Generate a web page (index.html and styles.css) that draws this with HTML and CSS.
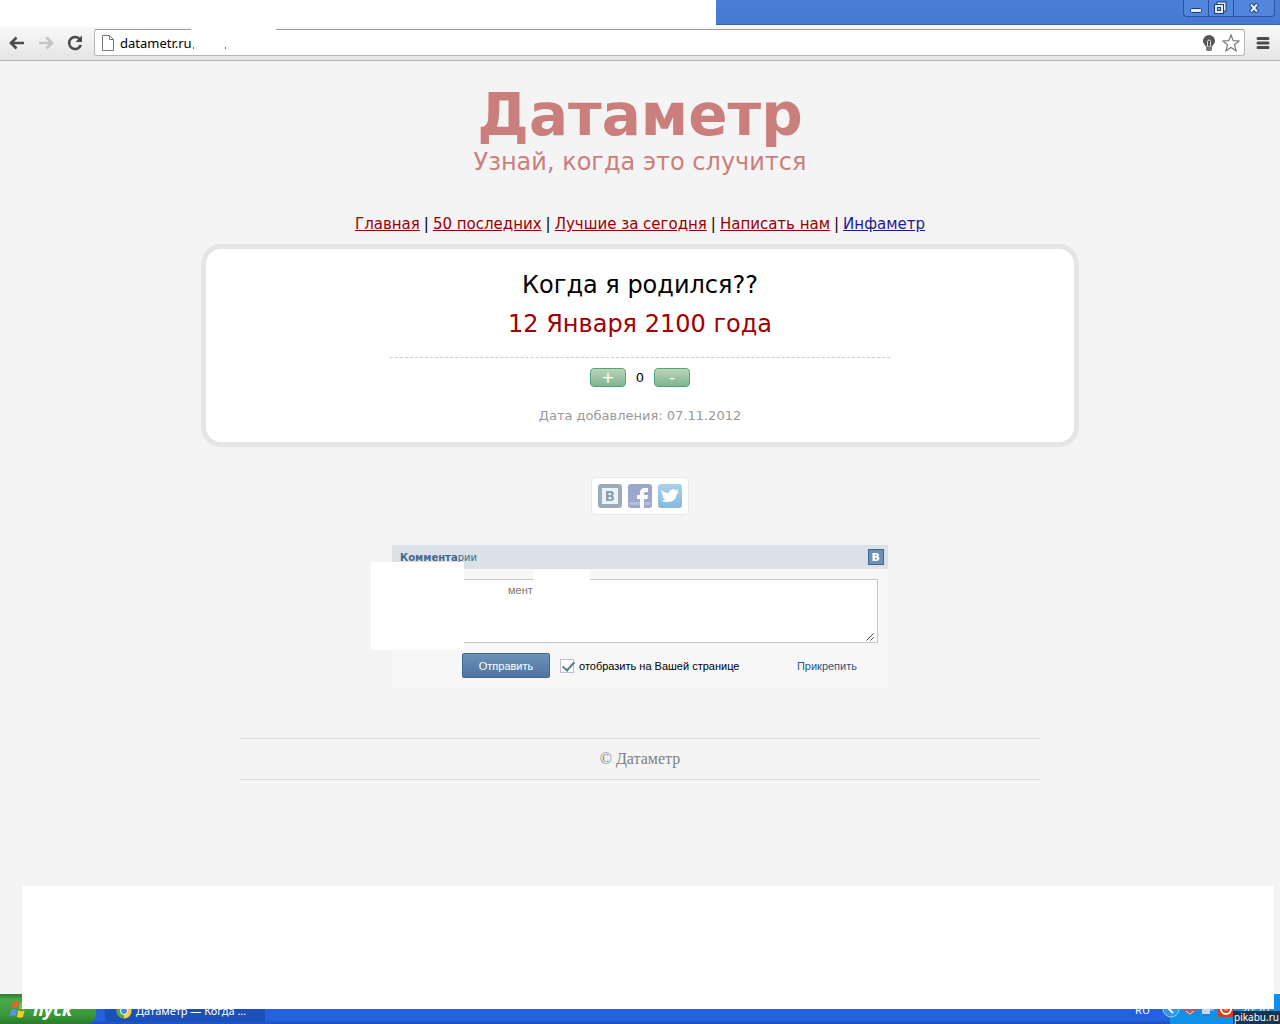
FILE: index.html
```html
<!DOCTYPE html>
<html lang="ru">
<head>
<meta charset="utf-8">
<title>Датаметр — Когда я родился??</title>
<link rel="stylesheet" href="styles.css">
</head>
<body>
<div class="titlebar">
  <div class="window-buttons">
    <button class="win-btn" aria-label="Свернуть"><svg width="24" height="16" viewBox="0 0 24 16"><rect x="6.500" y="8.500" width="11" height="4" rx="1" fill="#e4eefc" stroke="#1d3d78"/></svg></button>
    <button class="win-btn" aria-label="Развернуть"><svg width="24" height="16" viewBox="0 0 24 16"><g fill="none"><path d="M9.500 3.500h6v6h-6z" stroke="#1d3d78" stroke-width="4"/><path d="M9.500 3.500h6v6h-6z" stroke="#e4eefc" stroke-width="2"/><path d="M7 6h6v6H7z" stroke="#1d3d78" stroke-width="4" fill="#1d3d78"/><path d="M7 6h6v6H7z" stroke="#e4eefc" stroke-width="2"/><path d="M9 8h2v2H9z" fill="#9cbcf0"/></g></svg></button>
    <button class="win-btn win-close" aria-label="Закрыть"><svg width="40" height="16" viewBox="0 0 40 16"><path d="M16.500 4l7 8M23.500 4l-7 8" stroke="#1d3d78" stroke-width="4"/><path d="M17 4.500l6 7M23 4.500l-6 7" stroke="#e4eefc" stroke-width="2"/></svg></button>
  </div>
  <div class="patch patch-tabs"></div>
</div>
<div class="toolbar">
  <button class="tool" aria-label="Назад"><svg width="18" height="18" viewBox="0 0 18 18"><path d="M16 9H3M8.500 3.500L3 9l5.500 5.500" fill="none" stroke="#4b4b4b" stroke-width="2.700"/></svg></button>
  <button class="tool" aria-label="Вперёд"><svg width="18" height="18" viewBox="0 0 18 18"><path d="M2 9h13M9.500 3.500L15 9l-5.500 5.500" fill="none" stroke="#c4c4c4" stroke-width="2.700"/></svg></button>
  <button class="tool" aria-label="Обновить"><svg width="18" height="18" viewBox="0 0 18 18"><path d="M14 5.500A6 6 0 1 0 14.800 11" fill="none" stroke="#4b4b4b" stroke-width="2.600"/><path d="M16 1.500V8H9.500z" fill="#4b4b4b"/></svg></button>
  <div class="omnibox">
    <svg width="12" height="16" viewBox="0 0 12 16"><path d="M.5.5h7l4 4v11H.5zM7.500.5v4h4" fill="#fff" stroke="#777"/></svg>
    <input class="address" type="text" value="datametr.ru" aria-label="Адрес">
    <svg width="14" height="18" viewBox="0 0 14 18"><path d="M7 1a6 6 0 0 1 6 6c0 3-2.500 3.500-2.500 5.500h-7C3.500 10.500 1 10 1 7a6 6 0 0 1 6-6z" fill="#555"/><path d="M5.500 12V7.500a1.500 1.500 0 0 1 3 0V12" fill="none" stroke="#ddd"/><path d="M4 13h6v2.500L9 17H5l-1-1.500z" fill="#777"/></svg>
    <svg width="18" height="18" viewBox="0 0 18 18"><path d="M9 1l2.200 5.700 6 .3-4.700 3.800 1.600 6L9 13.500l-5.100 3.300 1.600-6L.8 7l6-.3z" fill="#fff" stroke="#777" stroke-width="1.200"/></svg>
    <div class="patch patch-address"></div>
  </div>
  <button class="tool" aria-label="Меню"><svg width="14" height="14" viewBox="0 0 14 14"><path d="M2 2.500h10M2 7h10M2 11.500h10" stroke="#4b4b4b" stroke-width="3" stroke-linecap="round"/></svg></button>
</div>

<main class="page">
  <header class="logo">
    <h1>Датаметр</h1>
    <p>Узнай, когда это случится</p>
  </header>
  <nav class="nav">
    <a href="#">Главная</a><span>|</span><a href="#">50 последних</a><span>|</span><a href="#">Лучшие за сегодня</a><span>|</span><a href="#">Написать нам</a><span>|</span><a class="blue" href="#">Инфаметр</a>
  </nav>
  <section class="card">
    <h2 class="question">Когда я родился??</h2>
    <p class="answer">12 Января 2100 года</p>
    <div class="vote"><button>+</button><span>0</span><button>-</button></div>
    <p class="added">Дата добавления: 07.11.2012</p>
  </section>
  <div class="share">
    <a href="#" aria-label="ВКонтакте"><svg width="24" height="24" viewBox="0 0 24 24"><rect width="24" height="24" rx="3" fill="#9cabb9"/><rect x="4" y="4" width="16" height="16" fill="#e9f3f8"/><path fill-rule="evenodd" d="M8 7h5c3.500 0 3.500 4 1.500 4.700C17 12.500 16.500 17 13 17H8zM10.500 9v2h1.800c1.200 0 1.200-2 0-2zM10.500 13v2.200h2c1.500 0 1.500-2.200 0-2.200z" fill="#8c9fae"/></svg></a>
    <a href="#" aria-label="Facebook"><svg width="24" height="24" viewBox="0 0 24 24"><rect width="24" height="24" rx="3" fill="#9ba7cc"/><path d="M1 18h22v3H1z" fill="#b4bddb"/><path d="M12 24v-9H9v-4h3V9c0-3.500 2-5 4.500-5H20v4h-2c-1.500 0-2 .5-2 1.500V11h4l-.5 4H16v9z" fill="#fff"/></svg></a>
    <a href="#" aria-label="Twitter"><svg width="24" height="24" viewBox="0 0 24 24"><defs><linearGradient id="tw" x2="0" y2="1"><stop stop-color="#acd1e8"/><stop offset="1" stop-color="#83bade"/></linearGradient></defs><rect width="24" height="24" rx="3" fill="url(#tw)"/><path d="M3 6c2.500 2 5 3 8 3C11 5 16 4 17.500 6.500l3-1-1.500 2.500 2 .3-2.500 2c0 5.200-4 7.700-8.500 7.700-2.500 0-5-.5-6.500-1.600 2 0 3-.4 4-1.300-2-.5-2.500-1.300-3-2.600h1.500C4.500 11.500 3.500 10.300 3.700 9L5 9.400C3.700 8.500 2.700 7.300 3 6z" fill="#fff"/></svg></a>
  </div>

  <form class="comments">
    <div class="comments-head"><h3><b>Коммента</b>рии</h3><svg width="16" height="16" viewBox="0 0 16 16"><rect x=".5" y=".5" width="15" height="15" fill="#6d90b6" stroke="#41658f"/><path fill-rule="evenodd" d="M4.500 4h4c3 0 3 3 1.500 3.600 2.200.6 2 4.400-1.500 4.400h-4zM7 5.500V7h1c1 0 1-1.500 0-1.500zM7 8.700v1.700h1.200c1 0 1-1.700 0-1.700z" fill="#fff"/></svg></div>
    <div class="comment-box">
      <textarea aria-label="Комментарий">мент</textarea>
      <svg class="grip" width="8" height="8" viewBox="0 0 8 8"><path d="M.5 7.500l7-7M4.500 7.500l3-3" stroke="#444"/></svg>
    </div>
    <div class="comment-actions">
      <button type="button">Отправить</button>
      <label><input type="checkbox" checked>отобразить на Вашей странице</label>
      <a href="#">Прикрепить</a>
    </div>
    <div class="patch patch-avatar"></div>
    <div class="patch patch-hint"></div>
  </form>

  <footer class="footer">© Датаметр</footer>
</main>

<div class="taskbar">
  <button class="start"><svg width="20" height="20" viewBox="0 0 20 20"><path d="M4 3c2-1.500 4-1.300 6 0L8.500 9.500c-2-1.200-4-1.200-6 0z" fill="#e8602c"/><path d="M11 3.500c2 1 4 1.200 6.500.2L16 10c-2.200 1-4.200.8-6.200-.2z" fill="#7cc142"/><path d="M2 11c2-1.300 4-1.200 6 0l-1.500 6.500c-2-1.200-4-1.200-6 0z" fill="#5b93ea"/><path d="M9.300 11.300c2 1 4 1.200 6.300.2L14 18c-2 1-4 .8-6.200-.3z" fill="#f8ca2f"/></svg>пуск</button>
  <button class="task"><svg width="16" height="16" viewBox="0 0 16 16"><circle cx="8" cy="8" r="7.500" fill="#e5493a"/><path d="M8 8L1.500 4.300A7.500 7.500 0 0 0 8 15.500z" fill="#4aae4e"/><path d="M8 15.500A7.500 7.500 0 0 0 14.500 4.300H8z" fill="#f7cf3c"/><circle cx="8" cy="8" r="3.500" fill="#4a86e0" stroke="#fff"/></svg>Датаметр — Когда ...</button>
  <span class="lang">RU</span>
  <div class="tray">
    <svg width="18" height="18" viewBox="0 0 18 18"><circle cx="9" cy="9" r="8" fill="#2a9af0" stroke="#8cd0fb"/><path d="M11 5L7 9l4 4" fill="none" stroke="#fff" stroke-width="2"/></svg>
    <svg width="16" height="16" viewBox="0 0 16 16"><path d="M1 5l7-3 7 3v5l-7 4-7-4z" fill="#9c6270"/><path d="M4 10l4 3 4-3" stroke="#ddd" fill="none"/></svg>
    <svg width="16" height="16" viewBox="0 0 16 16"><path d="M6 2h8v8H6z" fill="#8ba6d8"/><path d="M2 7h8v6H2z" fill="#c8d5ee"/><path d="M3 14h6" stroke="#4463a6"/></svg>
    <svg width="16" height="16" viewBox="0 0 16 16"><rect width="16" height="16" rx="2" fill="#d83a24"/><circle cx="8" cy="8" r="5" fill="none" stroke="#fff" stroke-width="2"/><circle cx="8" cy="8" r="2" fill="#f5a42a"/></svg>
    <span class="clock">20:20</span>
  </div>
  <div class="patch patch-bottom"></div>
  <span class="watermark">pikabu.ru</span>
</div>
</body>
</html>
```
FILE: styles.css
```css
* { box-sizing: border-box; }
body {
  margin: 0;
  min-height: 100vh;
  display: flex;
  flex-direction: column;
  background: #f4f4f4;
  font-family: "DejaVu Sans", Verdana, sans-serif;
  font-size: 13px;
  color: #000;
}
h1, h2, h3, p { margin: 0; font-weight: normal; }
button, input, textarea { font-family: inherit; margin: 0; }
button { padding: 0; border: 0; background: none; }
svg { display: block; flex: none; }
.patch { position: absolute; background: #fff; }

.titlebar {
  position: relative;
  height: 25px;
  display: flex;
  justify-content: flex-end;
  background: linear-gradient(#4a7fd8, #4679d2);
  border-bottom: 1px solid #3a63b0;
}
.window-buttons {
  display: flex;
  height: 17px;
  margin-right: 5px;
  border: 1px solid #2c539c;
  border-top: 0;
  border-radius: 0 0 4px 4px;
  background: #5286dc;
}
.win-btn + .win-btn { border-left: 1px solid #2c539c; }
.patch-tabs { left: 0; right: 564px; top: 0; height: 27px; }

.toolbar {
  height: 36px;
  display: flex;
  align-items: center;
  gap: 11px;
  padding: 0 10px 0 8px;
  background: linear-gradient(#fafafa, #e4e4e4);
  border-bottom: 1px solid #b4b4b4;
}
.omnibox {
  position: relative;
  flex: 1;
  height: 27px;
  display: flex;
  align-items: center;
  gap: 6px;
  margin-left: -1px;
  padding: 0 4px 0 7px;
  background: #fff;
  border: 1px solid #b5b5b5;
  border-top-color: #999;
  border-radius: 3px;
}
.address {
  flex: 1;
  min-width: 0;
  padding: 0;
  border: 0;
  background: none;
  font-family: "Noto Sans", Tahoma, sans-serif;
  font-size: 13px;
}
.patch-address { left: 96px; top: -4px; width: 85px; height: 25px; }
.patch-address::before,
.patch-address::after {
  content: "";
  position: absolute;
  left: 2px;
  bottom: 2px;
  width: 1px;
  height: 2px;
  background: #777;
}
.patch-address::after { left: 34px; }

.page {
  flex: 1;
  display: flex;
  flex-direction: column;
  align-items: center;
  padding: 22px 16px 0;
}
.logo { color: #cb7f7d; text-align: center; }
.logo h1 { font-size: 58px; line-height: 64px; font-weight: bold; }
.logo p { margin-top: 1px; font-size: 24px; line-height: 28px; }
.nav {
  display: flex;
  gap: 4px;
  margin-top: 38px;
  font-size: 15px;
  line-height: 20px;
}
.nav a { color: #990000; }
.nav .blue { color: #1a1a99; }
.card {
  width: 100%;
  max-width: 878px;
  margin-top: 10px;
  padding: 20px 16px 17px;
  display: flex;
  flex-direction: column;
  align-items: center;
  background: #fff;
  border: 5px solid #e5e5e5;
  border-radius: 20px;
}
.question, .answer { font-size: 24px; line-height: 32px; }
.answer {
  width: 500px;
  max-width: 100%;
  margin-top: 7px;
  padding-bottom: 17px;
  text-align: center;
  color: #a00000;
  border-bottom: 1px dashed #ccc;
}
.vote { display: flex; gap: 10px; margin-top: 10px; line-height: 19px; }
.vote button {
  width: 36px;
  height: 19px;
  border: 1px solid #4fa57c;
  border-radius: 4px;
  background: linear-gradient(#bcd4b8, #7db592);
  color: #fff;
  font-size: 16px;
  line-height: 16px;
}
.added { margin-top: 20px; color: #999; line-height: 18px; }

.share {
  display: flex;
  gap: 6px;
  margin-top: 30px;
  padding: 6px;
  background: #fff;
  border: 1px solid #e9e9e9;
  border-radius: 4px;
}

.comments {
  position: relative;
  width: 100%;
  max-width: 496px;
  margin-top: 30px;
  background: #f7f7f7;
  font-family: "Liberation Sans", Tahoma, sans-serif;
  font-size: 11px;
}
.comments-head {
  height: 24px;
  display: flex;
  align-items: center;
  justify-content: space-between;
  padding: 0 4px 0 8px;
  background: #dae1e8;
  color: #45688e;
}
.comments-head h3 { font-family: "DejaVu Sans", Tahoma, sans-serif; font-size: 10px; }
.comment-box { position: relative; margin: 10px 10px 0 70px; }
.comment-box textarea {
  display: block;
  width: 100%;
  height: 64px;
  padding: 3px 45px;
  resize: none;
  border: 1px solid #c0c8d0;
  background: #fff;
  color: #777;
  font-size: 11px;
  line-height: 15px;
}
.grip { position: absolute; right: 4px; bottom: 2px; }
.comment-actions {
  display: flex;
  align-items: center;
  padding: 10px 31px 10px 70px;
}
.comment-actions button {
  width: 88px;
  height: 25px;
  border: 1px solid #45688e;
  border-radius: 2px;
  background: linear-gradient(#6d92b8, #4f75a0);
  color: #fff;
  font-size: 11px;
}
.comment-actions label { display: flex; align-items: center; gap: 5px; margin-left: 10px; }
.comment-actions input {
  appearance: none;
  width: 14px;
  height: 14px;
  border: 1px solid #b9c4cf;
  background: #fff;
}
.comment-actions input:checked::before {
  content: "";
  display: block;
  width: 5px;
  height: 10px;
  margin: -1px 0 0 4px;
  border: solid #54789f;
  border-width: 0 2px 2px 0;
  transform: rotate(42deg);
}
.comment-actions a { margin-left: auto; color: #2b587a; text-decoration: none; }
.patch-avatar { left: -21px; top: 17px; width: 93px; height: 88px; }
.patch-hint { left: 141px; top: 25px; width: 57px; height: 20px; }

.footer {
  width: 100%;
  max-width: 800px;
  margin: 50px 0;
  padding: 10px 0;
  border: solid #dcdcdc;
  border-width: 1px 0;
  text-align: center;
  color: #808080;
  font: 16px/20px "Liberation Serif", "Times New Roman", serif;
}

.taskbar {
  position: relative;
  height: 30px;
  display: flex;
  align-items: center;
  background: linear-gradient(#3f83ee, #245edb 20%, #2562df 85%, #1d4fc0);
  color: #fff;
  font-family: "Noto Sans", Tahoma, sans-serif;
  font-size: 11px;
}
.start {
  width: 96px;
  height: 30px;
  display: flex;
  align-items: center;
  gap: 4px;
  padding-left: 9px;
  border-radius: 0 10px 10px 0;
  background: linear-gradient(#2e7d2e, #4bab4b 20%, #3a983a 70%, #2b7a2b);
  color: #fff;
  font: italic bold 18px "Open Sans", sans-serif;
}
.task {
  width: 160px;
  height: 26px;
  margin-left: 9px;
  display: flex;
  align-items: center;
  gap: 4px;
  padding: 3px 11px 0;
  border-radius: 3px;
  background: #1d4fb8;
  color: #fff;
  font-size: 11px;
  white-space: nowrap;
}
.lang { margin-left: auto; }
.tray {
  height: 30px;
  display: flex;
  align-items: center;
  gap: 2px;
  width: 118px;
  margin-left: 12px;
  background: linear-gradient(90deg, transparent 8px, #1290e8 8px);
}
.clock { margin-left: 5px; }
.patch-bottom { left: 22px; right: 6px; bottom: 15px; height: 123px; }
.watermark {
  position: absolute;
  right: 0;
  bottom: 0;
  padding: 0 1px;
  background: #16344f;
  font-size: 10px;
  line-height: 13px;
}
```
